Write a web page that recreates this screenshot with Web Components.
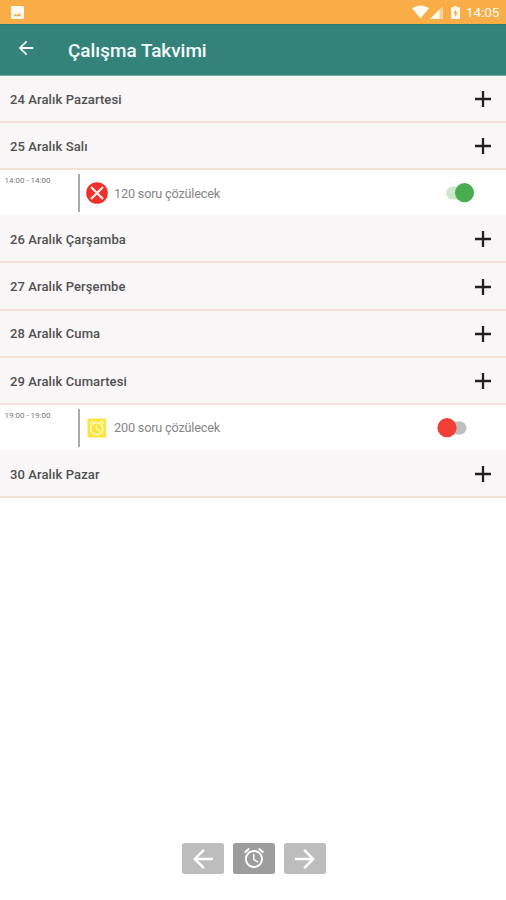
<!DOCTYPE html>
<html lang="tr"><head><meta charset="utf-8"><title>Çalışma Takvimi</title>
<style>html,body{margin:0;height:100%;background:#fff}body{font-family:Roboto,"Liberation Sans",sans-serif;overflow:hidden}</style></head>
<body>
<study-app>
  <status-bar slot="top" time="14:05"></status-bar>
  <app-header slot="top">Çalışma Takvimi</app-header>
  <day-row>24 Aralık Pazartesi</day-row>
  <day-row>25 Aralık Salı</day-row>
  <task-row time="14:00 - 14:00" icon="missed" on>120 soru çözülecek</task-row>
  <day-row>26 Aralık Çarşamba</day-row>
  <day-row>27 Aralık Perşembe</day-row>
  <day-row>28 Aralık Cuma</day-row>
  <day-row>29 Aralık Cumartesi</day-row>
  <task-row time="19:00 - 19:00" icon="alarm">200 soru çözülecek</task-row>
  <day-row>30 Aralık Pazar</day-row>
  <nav-buttons slot="bottom"></nav-buttons>
</study-app>
<script>
const define=(name,render)=>customElements.define(name,class extends HTMLElement{
  connectedCallback(){ if(!this.shadowRoot) this.attachShadow({mode:'open'}).innerHTML=render(this); }
});
const alarm='<path d="M22 5.72l-4.6-3.86-1.29 1.53 4.6 3.86L22 5.72zM7.88 3.39L6.6 1.86 2 5.71l1.29 1.53 4.59-3.85zM12.5 8H11v6l4.75 2.85.75-1.23-4-2.37V8zM12 4c-4.97 0-9 4.03-9 9s4.02 9 9 9c4.97 0 9-4.03 9-9s-4.03-9-9-9zm0 16c-3.87 0-7-3.13-7-7s3.13-7 7-7 7 3.13 7 7-3.13 7-7 7z"/>';
const back='<path d="M20 11H7.83l5.59-5.59L12 4l-8 8 8 8 1.41-1.41L7.83 13H20v-2z"/>';
const fwd='<path d="M12 4l-1.41 1.41L16.17 11H4v2h12.17l-5.58 5.59L12 20l8-8z"/>';

define('study-app',()=>`<style>
:host{display:flex;flex-direction:column;height:900px;width:506px;background:#fff}
main{flex:1;display:flex;flex-direction:column}</style>
<slot name="top"></slot><main><slot></slot></main><slot name="bottom"></slot>`);

define('status-bar',el=>`<style>
:host{display:flex;align-items:center;height:23.5px;box-sizing:border-box;padding:1px 7px 0 11px;background:#f8ad46;color:#fffdf5;font-size:13.5px;fill:#fffaf0}
svg{display:block}.pic{margin-right:auto}.wifi{margin-right:1px}.sig{margin-right:8px}.bat{margin-right:6px}
span{display:block;width:33px;white-space:nowrap;letter-spacing:-.1px}</style>
<svg class="pic" width="13" height="13" viewBox="0 0 13 13"><path fill-rule="evenodd" d="M1.2 0h10.6Q13 0 13 1.2v10.6Q13 13 11.800 13H1.200Q0 13 0 11.800V1.200Q0 0 1.200 0zM2.200 10.300h8.400L8 6.900 6 9.300 4.600 7.800z"/></svg>
<svg class="wifi" width="17" height="14" viewBox="0 0 17 14"><path d="M0 3.300C5 -.6 12 -.6 17 3.300L8.500 13.500z"/></svg>
<svg class="sig" width="13" height="13" viewBox="0 0 13 13"><path d="M0 13L13 0v13z" opacity=".45"/><path d="M0 13L9.500 3.500V13z"/></svg>
<svg class="bat" width="9" height="13" viewBox="0 0 9 13"><path fill-rule="evenodd" d="M3 0h3v1.300h2.200q.8 0 .8.800v10q0 .9-.8.900H.8q-.8 0-.8-.9v-10q0-.8.800-.8H3zM5 3.200L2.200 7.600H4v3.600l2.800-4.800H5z"/></svg>
<span>${el.getAttribute('time')}</span>`);

define('app-header',()=>`<style>
:host{display:flex;align-items:center;height:52.3px;box-sizing:border-box;padding-left:16px;background:#34837b;color:#f4fbfa;border-top:1px solid #2b7c6c;border-bottom:1px solid #72aaa2}
svg{width:22px;height:22px;fill:#f4fbfa;margin-top:-3px;margin-left:-1px;margin-right:31px}
h1{margin:0;padding-top:2px;font-size:18.900px;font-weight:500;line-height:24px;white-space:nowrap}</style>
<svg viewBox="0 0 24 24">${back}</svg><h1><slot></slot></h1>`);

define('day-row',()=>`<style>
:host{display:flex;align-items:center;justify-content:space-between;height:47.3px;box-sizing:border-box;padding:1.500px 15px 0 10px;background:#f8f6f7;border-bottom:2px solid #f5e0d7;color:#505050;font-size:13px;font-weight:500;letter-spacing:.1px}
svg{display:block}span{white-space:nowrap}</style>
<span><slot></slot></span><svg width="16" height="16" viewBox="0 0 16 16"><path d="M0 8h16M8 0v16" stroke="#202020" stroke-width="2.300"/></svg>`);

define('task-row',el=>{
const on=el.hasAttribute('on');
const icon=el.getAttribute('icon')==='missed'
?'<svg width="22" height="22" viewBox="0 0 22 22"><circle cx="11" cy="11" r="10.800" fill="#ee3029"/><path d="M5 5l12 12M17 5l-12 12" stroke="#fff1ee" stroke-width="2.200"/></svg>'
:`<svg width="22" height="22" viewBox="0 0 22 22"><rect x="1.500" y="1.500" width="18.500" height="19" rx="1" fill="#fce43a"/><g transform="translate(1.500 1.600) scale(.76)" fill="#fffbd0">${alarm}</g></svg>`;
return `<style>
:host{display:flex;height:45.6px;box-sizing:border-box;background:linear-gradient(#fff 44.700px,#f8f6f7 44.700px);color:#858585}
.time{width:78px;box-sizing:border-box;padding:5px 0 0 4.500px;font-size:8px;line-height:11px;white-space:nowrap;color:#777}
.task{flex:1;display:flex;align-items:center;margin:4px 0 4px;border-left:2px solid #aaa;padding-left:6px;font-size:12.700px;letter-spacing:-.19px}
svg{display:block;flex:none}.label{margin-left:6px;white-space:nowrap}
.switch{margin-left:auto;margin-right:${on?31:39}px}</style>
<div class="time">${el.getAttribute('time')}</div>
<div class="task">${icon}<span class="label"><slot></slot></span>
<svg class="switch" width="31" height="22" viewBox="0 0 31 22">${on
?'<rect x="2" y="4.500" width="24" height="13" rx="6.500" fill="#cbe8cb"/><circle cx="20.500" cy="10.700" r="9.600" fill="#49ad4f"/>'
:'<rect x="5" y="4.500" width="25.500" height="13" rx="6.500" fill="#bebebe"/><circle cx="11" cy="10.700" r="9.600" fill="#f23f36"/>'}</svg></div>`});

define('nav-buttons',()=>`<style>
:host{display:flex;justify-content:center;gap:9px;padding-bottom:26px;padding-left:1px}
button{width:42px;height:31px;padding:0;border:0;border-radius:2.500px;background:#bdbdbd;display:flex;align-items:center;justify-content:center}
.mid{background:#9d9d9d}svg{width:30px;height:30px;fill:#fff;display:block}.mid svg{width:24px;height:24px;margin-top:-1px}</style>
<button aria-label="Önceki"><svg viewBox="0 0 24 24">${back}</svg></button>
<button class="mid" aria-label="Alarm"><svg viewBox="0 0 24 24">${alarm}</svg></button>
<button aria-label="Sonraki"><svg viewBox="0 0 24 24">${fwd}</svg></button>`);
</script></body></html>
